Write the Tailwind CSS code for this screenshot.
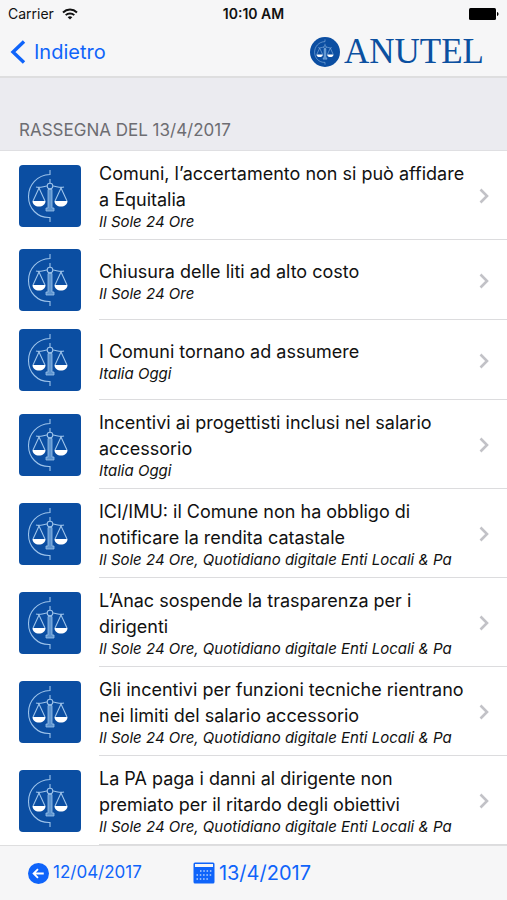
<!DOCTYPE html>
<html lang="it">
<head>
    <meta charset="UTF-8">
    <meta name="viewport" content="width=device-width, initial-scale=1.0">
    <title>ANUTEL - Rassegna</title>
    <script src="https://cdn.jsdelivr.net/npm/@tailwindcss/browser@4"></script>
</head>
<body class="min-h-screen flex flex-col bg-white text-[#111] font-['Inter','Liberation_Sans',sans-serif]">
    <!-- Shared drawings -->
    <svg class="hidden" aria-hidden="true">
        <symbol id="scales" viewBox="0 0 62 62">
            <g fill="none" stroke="#9dc3ea" stroke-width="1.1">
                <path d="M31 5v4.500C18 10 9.500 20 9.500 31.500S18 53 31 52.500V57"/>
                <path d="M31 14v4M17 22c4 1.500 8-1 11-1M45 22c-4 1.500-8-1-11-1"/>
                <circle cx="31" cy="21" r="2.800"/>
                <path d="M20 23l-6 13M20 23l6 13M42 23l-6 13M42 23l6 13"/>
            </g>
            <path d="M29 24.500h4V43h2v3h-8v-3h2z" fill="#5c93cf" stroke="#9dc3ea" stroke-width=".8"/>
            <path d="M13.500 36h13c0 3.500-3 5.500-6.500 5.500s-6.500-2-6.500-5.500zM35.500 36h13c0 3.500-3 5.500-6.500 5.500s-6.500-2-6.500-5.500z" fill="#fff"/>
        </symbol>
        <symbol id="chevron" viewBox="0 0 10 16">
            <path d="M1.500 1.500L8 8l-6.500 6.500" fill="none" stroke="#c2c2c7" stroke-width="2.600"/>
        </symbol>
    </svg>

    <header class="bg-[#f6f6f7] border-b-2 border-[#dededf]">
        <div class="grid grid-cols-3 items-center h-7 px-2 text-[13px]">
            <div class="flex items-center gap-3">
                <span class="text-sm">Carrier</span>
                <svg class="w-4 h-3 -ml-1" viewBox="0 0 16 12" fill="none" stroke="#111" stroke-width="2">
                    <path d="M1 4.400C5 .6 11 .6 15 4.400M3.700 7.100c2.400-2.300 6.200-2.300 8.600 0"/>
                    <path d="M8 11.500L5.700 9.200c1.300-1.200 3.300-1.200 4.600 0z" fill="#111" stroke="none"/>
                </svg>
            </div>
            <span class="text-center text-sm font-semibold whitespace-nowrap">10:10 AM</span>
            <svg class="w-[30px] h-3 justify-self-end" viewBox="0 0 30 12">
                <rect width="27" height="12" rx="1.500"/>
                <path d="M28 4c2 .5 2 3.500 0 4z"/>
            </svg>
        </div>
        <div class="flex items-center justify-between h-12 pl-[10px] pr-[23px]">
            <a href="#" class="flex items-center gap-2 text-xl text-[#0f64fa]">
                <svg class="w-4 h-6" viewBox="0 0 16 24" fill="none" stroke="currentColor" stroke-width="3.400">
                    <path d="M14 1.500L3 12l11 10.500"/>
                </svg>
                Indietro
            </a>
            <div class="flex items-center gap-1">
                <svg class="w-[30px] h-[30px]" viewBox="0 0 62 62">
                    <circle cx="31" cy="31" r="31" fill="#0b4ea2"/>
                    <use href="#scales" width="62" height="62"/>
                </svg>
                <span class="text-[35px] leading-10 text-[#0b50a0] font-['Liberation_Serif',serif]">ANUTEL</span>
            </div>
        </div>
    </header>

    <main>
        <h1 class="flex items-end h-[73px] px-[19px] pb-2 bg-[#ebebf0] border-b border-[#dfdfe2] text-[17px] leading-6 text-[#6d6d72]">RASSEGNA DEL 13/4/2017</h1>
        <ul id="news"></ul>
    </main>

    <footer class="flex items-center flex-1 min-h-[54px] px-7 gap-[51px] bg-[#f6f6f7] border-t border-[#dededf] text-[#0f64fa]">
        <button type="button" class="flex items-center gap-1 text-[17px]">
            <svg class="w-[21px] h-[21px]" viewBox="0 0 20 20">
                <circle cx="10" cy="10" r="10" fill="currentColor"/>
                <path d="M15 10H5.500M9.500 5.800L5.300 10l4.200 4.200" fill="none" stroke="#fff" stroke-width="1.700"/>
            </svg>
            12/04/2017
        </button>
        <button type="button" class="flex items-center gap-1 text-xl">
            <svg class="w-[22px] h-[22px]" viewBox="0 0 22 22">
                <rect x=".5" y=".5" width="21" height="21" rx="1.500" fill="currentColor"/>
                <path d="M2 2h18v3H2z" fill="#f6f6f7"/>
                <path d="M7 9h12M3.500 13h15M3.500 17h12" stroke="#b9d2fb" stroke-width="1.500" stroke-dasharray="1.500 1.800"/>
            </svg>
            13/4/2017
        </button>
    </footer>

    <script>
        const news = [
            { title: "Comuni, l’accertamento non si può affidare a Equitalia", source: "Il Sole 24 Ore" },
            { title: "Chiusura delle liti ad alto costo", source: "Il Sole 24 Ore" },
            { title: "I Comuni tornano ad assumere", source: "Italia Oggi" },
            { title: "Incentivi ai progettisti inclusi nel salario accessorio", source: "Italia Oggi" },
            { title: "ICI/IMU: il Comune non ha obbligo di notificare la rendita catastale", source: "Il Sole 24 Ore, Quotidiano digitale Enti Locali &amp; Pa" },
            { title: "L’Anac sospende la trasparenza per i dirigenti", source: "Il Sole 24 Ore, Quotidiano digitale Enti Locali &amp; Pa" },
            { title: "Gli incentivi per funzioni tecniche rientrano nei limiti del salario accessorio", source: "Il Sole 24 Ore, Quotidiano digitale Enti Locali &amp; Pa" },
            { title: "La PA paga i danni al dirigente non premiato per il ritardo degli obiettivi", source: "Il Sole 24 Ore, Quotidiano digitale Enti Locali &amp; Pa" }
        ];

        document.getElementById('news').innerHTML = news.map(item => `
            <li>
                <a href="#" class="flex items-center gap-[18px] pl-[19px]">
                    <svg class="w-[62px] h-[62px] shrink-0 rounded-sm bg-[#0b4ea2]"><use href="#scales"/></svg>
                    <div class="flex flex-1 items-center gap-3 min-h-20 pt-[10px] pb-2 pr-[18px] border-b border-[#dcdcde]">
                        <div class="flex-1">
                            <p class="text-lg leading-[26px]">${item.title}</p>
                            <p class="text-[15px] leading-[18px] italic">${item.source}</p>
                        </div>
                        <svg class="w-[10px] h-4 shrink-0"><use href="#chevron"/></svg>
                    </div>
                </a>
            </li>
        `).join('');
    </script>
</body>
</html>
